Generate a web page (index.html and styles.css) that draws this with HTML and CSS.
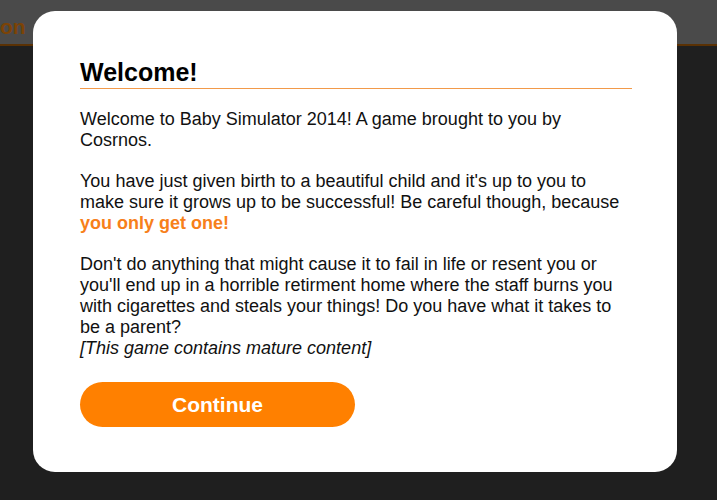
FILE: index.html
```html
<!DOCTYPE html>
<html>
<head>
  <title>Baby Simulator 2014</title>
  <link rel="stylesheet" href="styles.css">
</head>
<body>
  <div class="topbar">
    <span class="topbar-title">on</span>
  </div>
  <div class="stage"></div>

  <!-- intro dialog, shown over the game -->
  <div class="overlay">
    <div class="dialog">
      <h2 class="dialog-title">Welcome!</h2>
      <p>Welcome to Baby Simulator 2014! A game brought to you by Cosrnos.</p>
      <p>You have just given birth to a beautiful child and it's up to you to make sure it grows up to be successful! Be careful though, because <span class="hl">you only get one!</span></p>
      <p>Don't do anything that might cause it to fail in life or resent you or you'll end up in a horrible retirment home where the staff burns you with cigarettes and steals your things! Do you have what it takes to be a parent?<br>
        <i>[This game contains mature content]</i></p>
      <input type="button" value="Continue" class="button">
    </div>
  </div>
</body>
</html>
```

FILE: styles.css
```css
body {
  background-color: #1f1f1f;
  margin: 0;
  padding: 0;
  height: 100vh;
  display: flex;
  flex-direction: column;
  font-family: "Liberation Sans", Arial, sans-serif;
  overflow: hidden;
}
.topbar {
  height: 44px;
  flex: none;
  background-color: #4a4a4a;
  border-bottom: 2px solid #5a3104;
  display: flex;
  align-items: center;
}
.topbar-title {
  color: #7c4306;
  font-weight: bold;
  font-size: 21px;
  margin-top: 10px;
}
.stage {
  flex: 1;
}
.overlay {
  position: absolute;
  top: 0;
  left: 0;
  right: 0;
  bottom: 0;
  padding: 11px 0 0 33px;
}
.dialog {
  width: 644px;
  height: 461px;
  box-sizing: border-box;
  background-color: #fff;
  border-radius: 22px;
  padding: 47px 45px 0 47px;
  color: #111;
  font-size: 18px;
  line-height: 21px;
}
.dialog-title {
  margin: 0;
  font-size: 25px;
  line-height: 28px;
  padding-bottom: 2px;
  color: #000;
  border-bottom: 1px solid #f29a4a;
}
.dialog p {
  margin: 20px 0;
}
.hl {
  color: #f7801a;
  font-weight: bold;
}
.button {
  display: block;
  margin-top: 23px;
  width: 275px;
  height: 45px;
  border: 0;
  border-radius: 23px;
  background-color: #ff8000;
  color: #fff;
  font-family: "Liberation Sans", Arial, sans-serif;
  font-weight: bold;
  font-size: 21px;
  cursor: pointer;
}
.button:hover {
  background-color: #ff8f1f;
}
```
